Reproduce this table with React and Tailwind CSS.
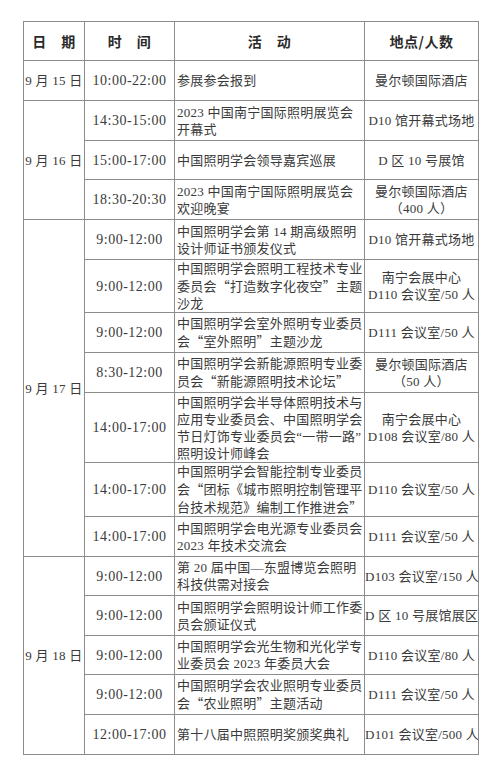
import React from "react";

const rows = [
  { date: "9 月 15 日", span: 1, time: "10:00-22:00", act: ["参展参会报到"], place: ["曼尔顿国际酒店"], h: 40 },
  { date: "9 月 16 日", span: 3, time: "14:30-15:00", act: ["2023 中国南宁国际照明展览会", "开幕式"], place: ["D10 馆开幕式场地"], h: 40 },
  { time: "15:00-17:00", act: ["中国照明学会领导嘉宾巡展"], place: ["D 区 10 号展馆"], h: 39 },
  { time: "18:30-20:30", act: ["2023 中国南宁国际照明展览会", "欢迎晚宴"], place: ["曼尔顿国际酒店", "（400 人）"], h: 40 },
  { date: "9 月 17 日", span: 7, time: "9:00-12:00", act: ["中国照明学会第 14 期高级照明", "设计师证书颁发仪式"], place: ["D10 馆开幕式场地"], h: 40 },
  { time: "9:00-12:00", act: ["中国照明学会照明工程技术专业", "委员会“打造数字化夜空”主题", "沙龙"], place: ["南宁会展中心", "D110 会议室/50 人"], h: 53 },
  { time: "9:00-12:00", act: ["中国照明学会室外照明专业委员", "会“室外照明”主题沙龙"], place: ["D111 会议室/50 人"], h: 40 },
  { time: "8:30-12:00", act: ["中国照明学会新能源照明专业委", "员会“新能源照明技术论坛”"], place: ["曼尔顿国际酒店", "（50 人）"], h: 40 },
  {
    time: "14:00-17:00",
    act: ["中国照明学会半导体照明技术与", "应用专业委员会、中国照明学会", <span key="n">节日灯饰专业委员会“一带一路”</span>, "照明设计师峰会"],
    place: ["南宁会展中心", "D108 会议室/80 人"],
    h: 70,
  },
  { time: "14:00-17:00", act: ["中国照明学会智能控制专业委员", "会“团标《城市照明控制管理平", "台技术规范》编制工作推进会”"], place: ["D110 会议室/50 人"], h: 54 },
  { time: "14:00-17:00", act: ["中国照明学会电光源专业委员会", "2023 年技术交流会"], place: ["D111 会议室/50 人"], h: 40 },
  { date: "9 月 18 日", span: 5, time: "9:00-12:00", act: ["第 20 届中国—东盟博览会照明", "科技供需对接会"], place: ["D103 会议室/150 人"], h: 39 },
  { time: "9:00-12:00", act: ["中国照明学会照明设计师工作委", "员会颁证仪式"], place: ["D 区 10 号展馆展区"], h: 40 },
  { time: "9:00-12:00", act: ["中国照明学会光生物和光化学专", "业委员会 2023 年委员大会"], place: ["D110 会议室/80 人"], h: 39 },
  { time: "9:00-12:00", act: ["中国照明学会农业照明专业委员", "会“农业照明”主题活动"], place: ["D111 会议室/50 人"], h: 40 },
  { time: "12:00-17:00", act: ["第十八届中照照明奖颁奖典礼"], place: ["D101 会议室/500 人"], h: 40 },
];

// full-width curly quotes, as in the printed table
function Line({ s }) {
  if (typeof s !== "string") return s;
  return s.split(/([“”])/).map((p, i) =>
    p === "“" || p === "”" ? (
      <span key={i} className="font-['Noto_Sans_CJK_SC',sans-serif]">{p}</span>
    ) : (
      p
    )
  );
}

const cell = "border border-[#8c8c8c] p-0 align-middle";

export default function App() {
  return (
    <div className="w-[500px] h-[778px] bg-white pl-[23px] pt-[21px] text-[#3a3a3a] font-['Liberation_Serif','Noto_Sans_CJK_SC',serif]">
      <table className="border-collapse w-[455px] table-fixed text-[13px] tracking-[0.25px] leading-[17px]">
        <colgroup>
          <col className="w-[61px]" />
          <col className="w-[90px]" />
          <col className="w-[190px]" />
          <col className="w-[114px]" />
        </colgroup>
        <thead>
          <tr className="h-[39px] font-bold text-[14px] tracking-[0.5px] font-['Noto_Sans_CJK_SC',sans-serif] text-[#2a2a2a]">
            <th className={cell + " text-center"}>日　期</th>
            <th className={cell + " text-center"}>时　间</th>
            <th className={cell + " text-center"}>活　动</th>
            <th className={cell + " text-center"}>地点/人数</th>
          </tr>
        </thead>
        <tbody>
          {rows.map((r, i) => (
            <tr key={i} style={{ height: r.h }}>
              {r.date && (
                <td rowSpan={r.span} className={cell + " text-center whitespace-nowrap"}>
                  {r.date}
                </td>
              )}
              <td className={cell + " text-center whitespace-nowrap text-[14px] tracking-[0.5px]"}>{r.time}</td>
              <td className={cell + " pl-[2px] whitespace-nowrap"}>
                {r.act.map((l, j) => (
                  <div key={j}>
                    <Line s={l} />
                  </div>
                ))}
              </td>
              <td className={cell + " text-center whitespace-nowrap"}>
                {r.place.map((l, j) => (
                  <div key={j}>{l}</div>
                ))}
              </td>
            </tr>
          ))}
        </tbody>
      </table>
    </div>
  );
}
